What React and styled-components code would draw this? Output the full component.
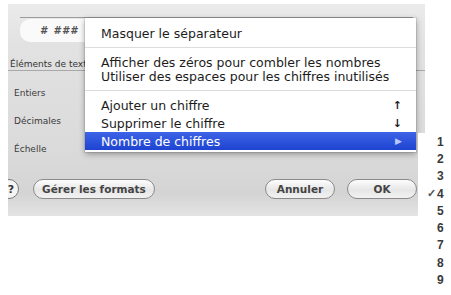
import React from "react"
import styled, { createGlobalStyle } from "styled-components"

const GlobalStyle = createGlobalStyle`
  body {
    margin: 0;
    background: #ffffff;
    font-family: "DejaVu Sans", "Liberation Sans", sans-serif;
  }
`

const Page = styled.div`
  position: relative;
  width: 451px;
  height: 295px;
  overflow: hidden;
  padding: 4px 0 0 8px;
  box-sizing: border-box;
`

const Dialog = styled.div`
  position: relative;
  width: 417px;
  height: 212px;
  padding-top: 13px;
  box-sizing: border-box;
  display: flex;
  flex-direction: column;
  background: linear-gradient(#ebebeb 0px, #e2e2e2 40px, #dadada 150px, #d4d4d4 190px, #e4e4e4 212px);
  overflow: hidden;
`

const FieldBar = styled.div`
  margin: 0 12px;
  height: 24px;
  border-top: 1px solid #9c9c9c;
  display: flex;
`

const Field = styled.div`
  width: 62px;
  margin-top: 1px;
  background: #fafafa;
  border-radius: 10px 0 0 10px;
  display: flex;
  align-items: center;
  padding-left: 20px;
  font-size: 10px;
  font-style: italic;
  font-weight: bold;
  color: #555;
  letter-spacing: 1.5px;
`

const SectionLabel = styled.div`
  margin-top: 17px;
  font-size: 9px;
  line-height: 11px;
  color: #333;
  white-space: nowrap;
  border-bottom: 1px solid #a8a8a8;
  padding-left: 2px;
`

const Rows = styled.div`
  margin-top: 8px;
  display: flex;
  flex-direction: column;
`

const Row = styled.div`
  height: 28px;
  display: flex;
  align-items: center;
  padding-left: 6px;
  font-size: 9px;
  color: #3a3a3a;
`

const Footer = styled.div`
  margin-top: 16px;
  display: flex;
  align-items: center;
  padding-right: 8px;
`

const PillButton = styled.div`
  height: 20px;
  width: ${p => p.$w}px;
  box-sizing: border-box;
  border: 1px solid #8a8a8a;
  border-radius: 10px;
  background: linear-gradient(#fdfdfd, #e6e6e6 55%, #f2f2f2);
  display: flex;
  align-items: center;
  justify-content: center;
  font-size: 10.5px;
  font-weight: bold;
  color: #444;
  margin-left: ${p => p.$ml || 0}px;
`

const HelpButton = styled.div`
  width: 20px;
  height: 20px;
  margin-left: -9px;
  padding-left: 4px;
  border: 1px solid #7a7a7a;
  border-radius: 50%;
  background: #f4f4f4;
  display: flex;
  align-items: center;
  justify-content: center;
  font-size: 11px;
  font-weight: bold;
  color: #333;
  box-sizing: border-box;
`

const Spacer = styled.div`
  flex: 1;
`

const Menu = styled.div`
  position: absolute;
  left: 77px;
  top: 14px;
  width: 331px;
  padding: 4px 0 2px;
  background: #ffffff;
  box-shadow: 0 2px 6px rgba(0, 0, 0, 0.35), 0 0 0 1px rgba(0, 0, 0, 0.08);
  font-size: 12.5px;
  color: #1c1c1c;
`

const Item = styled.div`
  height: ${p => p.$h || 18}px;
  display: flex;
  align-items: center;
  padding: 0 14px 0 16px;
  background: ${p => (p.$active ? "linear-gradient(#3d64e6, #1d43d1)" : "transparent")};
  color: ${p => (p.$active ? "#ffffff" : "#1c1c1c")};
  white-space: nowrap;
`

const Group = styled.div`
  padding: ${p => p.$pad};
`

const Sep = styled.div`
  height: 6px;
  display: flex;
  align-items: center;
  &::after {
    content: "";
    flex: 1;
    height: 1px;
    background: #dcdcdc;
  }
`

const Key = styled.span`
  margin-left: auto;
  font-size: 11px;
  font-weight: bold;
`

const Arrow = styled.span`
  margin-left: auto;
  font-size: 9px;
  color: #b8c8ff;
`

const SubMenu = styled.div`
  position: absolute;
  left: 418px;
  top: 133px;
  width: 33px;
  background: #ffffff;
  display: flex;
  flex-direction: column;
`

const Digit = styled.div`
  height: 17.3px;
  display: flex;
  align-items: center;
  font-family: "Liberation Sans", sans-serif;
  font-size: 12px;
  font-weight: bold;
  color: #3a3a3a;
`

const Check = styled.span`
  width: 18px;
  text-align: right;
  padding-right: 1px;
  font-size: 11px;
  color: #555;
`

const digits = [1, 2, 3, 4, 5, 6, 7, 8, 9]

export default function App() {
  return (
    <>
      <GlobalStyle />
      <Page>
        <Dialog>
          <FieldBar>
            <Field># ###</Field>
          </FieldBar>
          <SectionLabel>Éléments de texte</SectionLabel>
          <Rows>
            <Row>Entiers</Row>
            <Row>Décimales</Row>
            <Row>Échelle</Row>
          </Rows>
          <Footer>
            <HelpButton>?</HelpButton>
            <PillButton $w={122} $ml={14}>Gérer les formats</PillButton>
            <Spacer />
            <PillButton $w={70}>Annuler</PillButton>
            <PillButton $w={70} $ml={12}>OK</PillButton>
          </Footer>
          <Menu>
            <Item $h={22}>Masquer le séparateur</Item>
            <Sep />
            <Group $pad="5px 0 4px">
              <Item $h={14}>Afficher des zéros pour combler les nombres</Item>
              <Item $h={14}>Utiliser des espaces pour les chiffres inutilisés</Item>
            </Group>
            <Sep />
            <Group $pad="3px 0 0">
              <Item>Ajouter un chiffre<Key>↑</Key></Item>
              <Item>Supprimer le chiffre<Key>↓</Key></Item>
              <Item $h={18} $active>Nombre de chiffres<Arrow>▶</Arrow></Item>
            </Group>
          </Menu>
        </Dialog>
        <SubMenu>
          {digits.map(d => (
            <Digit key={d}>
              <Check>{d === 4 ? "✓" : ""}</Check>
              {d}
            </Digit>
          ))}
        </SubMenu>
      </Page>
    </>
  )
}
